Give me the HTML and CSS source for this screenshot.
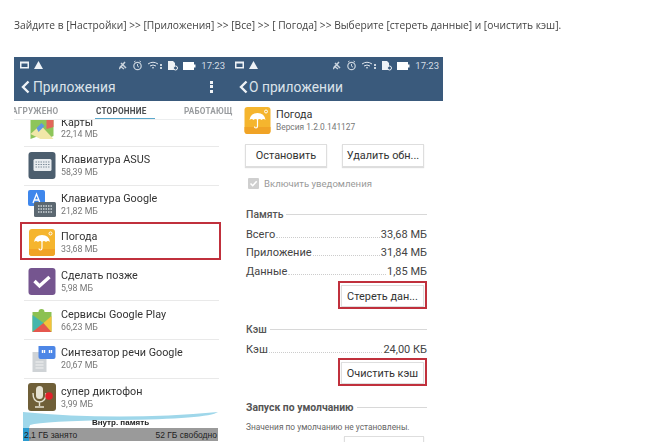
FILE: index.html
```html
<!DOCTYPE html>
<html lang="ru">
<head>
<meta charset="utf-8">
<title>Погода</title>
<link rel="stylesheet" href="styles.css">
</head>
<body>
<svg class="defs" width="0" height="0">
  <defs>
    <g id="status">
      <path d="M0 1.500h9v7H0z" fill="#eef2f6"/><path d="M1.500 3.500h6v3.500h-6z" fill="#3a5a7c"/>
      <path d="M14 9l4.500-8 4.500 8z" fill="#eef2f6"/>
    </g>
    <g id="status-right">
      <path d="M0 9L6 2M2 3l5 5M1 6l4 3" stroke="#c9d3dd" stroke-width="1.500" fill="none"/>
      <circle cx="18.500" cy="6" r="3.700" stroke="#c9d3dd" stroke-width="1.200" fill="none"/>
      <path d="M18.500 4v2.200l1.500 1M15 2l1.500-1M22 2l-1.500-1" stroke="#c9d3dd" fill="none"/>
      <path d="M29 4q5-3.500 10 0M31 6q3-2 6 0M33 8q1-.8 2 0" stroke="#dfe5ec" fill="none"/>
      <path d="M41 7h2v2h-2zM41 4h2v2h-2z" fill="#c9d3dd"/>
      <path d="M49 1h5l2 2v7h-7z" fill="#eef2f6"/><circle cx="56.500" cy="8" r="2" fill="#3a5a7c" stroke="#eef2f6"/>
      <path d="M64 2h11v8H64z" fill="#fff"/><path d="M75 4.500h1.500v3H75z" fill="#fff"/>
    </g>
    <g id="umbrella">
      <rect width="26" height="27" rx="3" fill="#f5b52e"/>
      <path d="M0 20h26v4a3 3 0 0 1-3 3H3a3 3 0 0 1-3-3z" fill="#f0a326"/>
      <path d="M5 13q1-7 8-7t8 7q-2-2-4 0-2-2-4 0-2-2-4 0-2-2-4 0z" fill="#fff"/>
      <path d="M13 12v7q0 2-1.500 2T10 19.500" stroke="#fff" stroke-width="1.200" fill="none"/>
      <circle cx="21.500" cy="4.500" r="1.500" stroke="#fff" fill="none"/>
    </g>
  </defs>
</svg>

<p class="intro">Зайдите в [Настройки] &gt;&gt; [Приложения] &gt;&gt; [Все] &gt;&gt; [ Погода] &gt;&gt; Выберите [стереть данные] и [очистить кэш].</p>

<div class="phones">
  <section class="phone phone-left">
    <header class="head">
      <div class="status">
        <svg width="24" height="11" viewBox="0 0 24 11"><use href="#status"/></svg>
        <div class="status-end">
          <svg width="77" height="11" viewBox="0 0 77 11"><use href="#status-right"/></svg>
          <span class="clock">17:23</span>
        </div>
      </div>
      <div class="bar">
        <svg class="back" width="9" height="14" viewBox="0 0 9 14"><path d="M7.500 1.500L2 7l5.500 5.500" stroke="#eef2f6" stroke-width="2.400" fill="none"/></svg>
        <span class="title">Приложения</span>
        <span class="dots"><i></i><i></i><i></i></span>
      </div>
    </header>
    <nav class="tabs">
      <span class="tab tab-first">АГРУЖЕНО</span>
      <span class="tab tab-on">СТОРОННИЕ</span>
      <span class="tab tab-last">РАБОТАЮЩ</span>
    </nav>
    <div class="list">
      <div class="row row-cut">
        <svg class="ico" width="28" height="27" viewBox="0 0 27 27"><path d="M2 6l8-4 8 3 7-3v20l-7 3-8-3-8 3z" fill="#8dc55a"/><path d="M18 5l7-3v11l-7 2z" fill="#e2665a"/><path d="M2 20l10-9 13 14H12z" fill="#f1e7a8"/><path d="M8 14l5-5 3 3-6 6z" fill="#5f97e0"/></svg>
        <div class="meta"><b>Карты</b><small>22,14 МБ</small></div>
      </div>
      <div class="row">
        <svg class="ico" width="28" height="27" viewBox="0 0 27 27"><rect width="27" height="27" rx="3" fill="#4c5e6e"/><rect x="5" y="7" width="18" height="12" rx="1.500" fill="#e8ecef"/><path d="M7 10h14M7 12.500h14M7 15h14" stroke="#7f8e9a" stroke-dasharray="1.500 1"/></svg>
        <div class="meta"><b>Клавиатура ASUS</b><small>58,39 МБ</small></div>
      </div>
      <div class="row">
        <svg class="ico" width="28" height="28" viewBox="0 0 28 28"><path d="M2 0h13a2 2 0 0 1 2 2v14H2a2 2 0 0 1-2-2V2a2 2 0 0 1 2-2z" fill="#3f87ec"/><path d="M5 13L8.500 4l3.500 9M6.500 10h4" stroke="#fff" stroke-width="1.300" fill="none"/><rect x="6" y="12" width="22" height="15" rx="1.500" fill="#5c6871"/><path d="M10 16h15M10 19h15M10 22h15" stroke="#cdd3d8" stroke-width="1.500" stroke-dasharray="1.500 1"/></svg>
        <div class="meta"><b>Клавиатура Google</b><small>21,82 МБ</small></div>
      </div>
      <div class="row row-marked">
        <svg class="ico" width="28" height="27" viewBox="0 0 26 27"><use href="#umbrella"/></svg>
        <div class="meta"><b>Погода</b><small>33,68 МБ</small></div>
        <span class="mark mark-row"></span>
      </div>
      <div class="row">
        <svg class="ico" width="28" height="27" viewBox="0 0 27 27"><rect width="27" height="27" rx="3" fill="#75558f"/><path d="M6 13l5 5 10-9" stroke="#fff" stroke-width="3.400" fill="none"/></svg>
        <div class="meta"><b>Сделать позже</b><small>5,98 МБ</small></div>
      </div>
      <div class="row">
        <svg class="ico" width="28" height="27" viewBox="0 0 27 27"><path d="M4 5h6a3 3 0 0 1 6 0h7v20H4z" fill="#8cc152"/><path d="M4 8l11 8-11 9z" fill="#45b6ac"/><path d="M4 25l11-9 8 9z" fill="#e5574e"/><path d="M15 16l8-7v16z" fill="#f5c13a"/></svg>
        <div class="meta"><b>Сервисы Google Play</b><small>66,23 МБ</small></div>
      </div>
      <div class="row">
        <svg class="ico" width="28" height="27" viewBox="0 0 27 27"><path d="M4 7h14v20H4z" fill="#cfd3d6"/><path d="M7 17h8M7 20h8M7 23h8" stroke="#f2f2f2"/><path d="M10 1h15a2 2 0 0 1 2 2v9a2 2 0 0 1-2 2H15l-3 0a2 2 0 0 1-2-2z" fill="#4d86e6"/><path d="M14 5v3M16 5v3M21 5v3M23 5v3" stroke="#fff" stroke-width="1.400"/></svg>
        <div class="meta"><b>Синтезатор речи Google</b><small>20,67 МБ</small></div>
      </div>
      <div class="row row-last">
        <svg class="ico" width="28" height="28" viewBox="0 0 28 28"><rect width="28" height="28" rx="3" fill="#6f5f38"/><rect x="8" y="3" width="7" height="13" rx="3.500" fill="#e6e2d2"/><path d="M5 10q0 9 6.500 9T18 10M11.500 19v4M7 24h9" stroke="#e6e2d2" stroke-width="1.400" fill="none"/><circle cx="21" cy="13" r="3.800" fill="#e0202a"/></svg>
        <div class="meta"><b>супер диктофон</b><small>3,99 МБ</small></div>
      </div>
      <div class="storage">
        <svg class="swoosh" width="195" height="16" viewBox="0 0 195 16" preserveAspectRatio="none"><path d="M0 0q95 9 195 0q-10 7-100 8Q20 9 7 13L6 16H0z" fill="#9fd7ea"/></svg>
        <div class="store-title">Внутр. память</div>
        <div class="store-bar"><span class="store-used"></span><span>2,1 ГБ занято</span><span>52 ГБ свободно</span></div>
      </div>
    </div>
  </section>

  <section class="phone phone-right">
    <header class="head">
      <div class="status">
        <svg width="24" height="11" viewBox="0 0 24 11"><use href="#status"/></svg>
        <div class="status-end">
          <svg width="77" height="11" viewBox="0 0 77 11"><use href="#status-right"/></svg>
          <span class="clock">17:23</span>
        </div>
      </div>
      <div class="bar">
        <svg class="back" width="9" height="14" viewBox="0 0 9 14"><path d="M7.500 1.500L2 7l5.500 5.500" stroke="#eef2f6" stroke-width="2.400" fill="none"/></svg>
        <span class="title">О приложении</span>
      </div>
    </header>
    <div class="detail">
      <div class="app">
        <svg width="27" height="27" viewBox="0 0 26 27"><use href="#umbrella"/></svg>
        <div class="meta meta-app"><b>Погода</b><small>Версия 1.2.0.141127</small></div>
      </div>
      <div class="btns">
        <span class="btn btn-wide">Остановить</span>
        <span class="btn btn-wide">Удалить обн...</span>
      </div>
      <div class="check"><span class="box"><svg width="11" height="11" viewBox="0 0 11 11"><path d="M2.500 5.500l2.200 2.200 4-4.500" stroke="#fff" stroke-width="1.600" fill="none"/></svg></span>Включить уведомления</div>

      <h3 class="sect sect-mem"><span>Память</span></h3>
      <div class="kv"><span>Всего</span><i></i><span>33,68 МБ</span></div>
      <div class="kv"><span>Приложение</span><i></i><span>31,84 МБ</span></div>
      <div class="kv"><span>Данные</span><i></i><span>1,85 МБ</span></div>
      <div class="action action-clear">
        <span class="btn btn-action">Стереть дан...<span class="mark"></span></span>
      </div>

      <h3 class="sect sect-cache"><span>Кэш</span></h3>
      <div class="kv"><span>Кэш</span><i></i><span>24,00 КБ</span></div>
      <div class="action">
        <span class="btn btn-action">Очистить кэш<span class="mark"></span></span>
      </div>

      <h3 class="sect sect-start"><span>Запуск по умолчанию</span></h3>
      <p class="note">Значения по умолчанию не установлены.</p>
      <div class="action action-tail"><span class="btn btn-tail"></span></div>
    </div>
  </section>
</div>
</body>
</html>
```

FILE: styles.css
```css
* { box-sizing: border-box; }
html, body { margin: 0; padding: 0; height: 446px; overflow: hidden; background: #fff; }
body { font-family: "Liberation Sans", Arial, sans-serif; color: #333; }
.defs { position: absolute; }

.intro {
  margin: 0;
  padding: 18px 0 0 14px;
  height: 57px;
  font-family: "Open Sans", sans-serif;
  font-size: 10.230px;
  line-height: 15px;
  color: #444;
  white-space: nowrap;
  filter: blur(0.3px);
}

.phones { display: flex; padding-left: 14px; height: 385px; filter: blur(0.45px); }
.phone { display: flex; flex-direction: column; overflow: hidden; }
.phone-left { width: 219px; }
.phone-right { width: 210px; }

.head { height: 44px; background: #3a5a7c; flex: none; }
.status { display: flex; justify-content: space-between; align-items: center; height: 15px; padding: 2px 8px 0 6px; }
.phone-right .status { padding: 2px 4px 0 2px; }
.status-end { display: flex; align-items: center; gap: 5px; }
.clock { font-family: Roboto, sans-serif; font-size: 9.500px; color: #d5dde5; }
.bar { display: flex; align-items: center; height: 29px; padding-left: 7px; }
.phone-right .bar { padding-left: 6px; }
.back { margin-right: 3px; flex: none; }
.phone-right .back { margin-right: 1px; }
.title { font-family: Roboto, sans-serif; font-size: 13.800px; color: #dbe3ea; white-space: nowrap; }
.dots { margin-left: auto; margin-right: 20px; display: flex; flex-direction: column; gap: 1.500px; }
.dots i { width: 3.500px; height: 3px; background: #f0f3f6; display: block; }

.tabs { position: relative; display: flex; height: 19px; flex: none; align-items: center; padding-top: 1px; background: #fff; border-bottom: 1px solid #eceeef; overflow: hidden; }
.tab { font-family: Roboto, sans-serif; font-size: 8.200px; font-weight: 700; letter-spacing: .2px; color: #9a9da0; white-space: nowrap; position: relative; }
.tab-first { margin-left: 0; width: 82px; text-indent: -2px; }
.tab-on { color: #4a4d50; width: 88px; }
.tab-on::after { content: ""; position: absolute; left: -1px; right: 29px; top: 12px; height: 2px; background: #5ba8cc; }
.tab-last { width: 49px; }

.list { position: relative; flex: 1; overflow: hidden; }
.row { position: relative; display: flex; align-items: center; height: 38.600px; margin: 0 14px 0 10px; padding-left: 4px; gap: 5px; border-bottom: 1px solid #e9e9e9; }
.row-cut { height: 27px; align-items: flex-end; padding-bottom: 6px; }
.row-marked, .row-last { border-bottom-color: #fff; }
.row-cut .meta b { line-height: 11px; height: 11px; overflow: hidden; }
.row-cut .ico { margin-bottom: -1px; }
.ico { flex: none; }
.meta { display: flex; flex-direction: column; min-width: 0; }
.meta b { font-weight: 400; font-family: Roboto, sans-serif; font-size: 10.800px; line-height: 13px; color: #333; white-space: nowrap; }
.meta small { font-family: Roboto, sans-serif; font-size: 8.800px; line-height: 12px; color: #777; white-space: nowrap; }
.meta-app small { font-size: 8.400px; }

.mark { position: absolute; border: 2px solid #c0303c; pointer-events: none; }
.mark-row { left: -4px; right: -2px; top: -2px; height: 38px; }

.storage { position: absolute; left: 9px; bottom: 1px; width: 195px; height: 29px; }
.swoosh { position: absolute; left: 0; top: 0; display: block; }
.store-title { position: absolute; left: 0; right: 0; top: 6px; text-align: center; font-size: 8px; font-weight: 700; color: #222; }
.store-bar { position: absolute; left: 0; right: 0; bottom: 0; height: 13px; background: #9a9a9a; display: flex; justify-content: space-between; align-items: center; padding-right: 1px; font-size: 8.500px; color: #222; }
.store-used { position: absolute; left: 0; top: 0; bottom: 0; width: 6px; background: #2a9bd0; }
.store-bar span:nth-child(2) { position: relative; padding-left: 1px; }

.detail { flex: 1; padding: 6px 16px 0 13px; background: #fff; overflow: hidden; }
.app { display: flex; align-items: center; gap: 5px; height: 27px; margin-left: -2px; }
.btns { display: flex; gap: 15px; margin-top: 10px; margin-left: -1px; }
.btn { position: relative; display: flex; align-items: center; justify-content: center; font-family: Roboto, sans-serif; font-size: 10.900px; color: #333; background: #fff; border: 1px solid #dedede; box-shadow: 0 1px 1px #ddd; white-space: nowrap; }
.btn-wide { width: 82px; height: 23px; }
.check { display: flex; align-items: center; gap: 5px; margin-top: 10px; margin-left: 2px; height: 12px; font-family: Roboto, sans-serif; font-size: 9.600px; color: #9a9a9a; white-space: nowrap; }
.box { display: block; width: 11px; height: 11px; background: #cfcfcf; border-radius: 1px; }
.box svg { display: block; }

.sect { display: flex; align-items: center; gap: 3px; margin: 0; font-family: Roboto, sans-serif; font-size: 10.400px; font-weight: 500; color: #555; white-space: nowrap; }
.sect::after { content: ""; flex: 1; height: 1px; background: #d8d8d8; }
.sect-mem { margin-top: 18px; height: 14px; }
.sect-cache { margin-top: 15px; height: 14px; }
.sect-start { margin-top: 16px; height: 14px; font-weight: 700; }

.kv { display: flex; align-items: baseline; gap: 1px; height: 18.600px; line-height: 18px; font-family: Roboto, sans-serif; font-size: 11px; color: #444; }
.kv i { flex: 1; border-bottom: 1px dotted #ccc; }
.sect-mem + .kv, .sect-cache + .kv { margin-top: 4.500px; }

.action { display: flex; justify-content: flex-end; margin-top: 3px; padding-right: 3px; }
.action-clear { margin-top: 4px; }
.action-tail { padding-right: 3px; }
.btn-action { width: 83px; height: 22px; }
.btn-action .mark { left: -4px; right: -4px; top: -5px; bottom: -3px; }
.note { margin: 7px 0 0; font-family: Roboto, sans-serif; font-size: 8.350px; line-height: 12px; color: #666; white-space: nowrap; }
.btn-tail { width: 80px; height: 23px; }
```
